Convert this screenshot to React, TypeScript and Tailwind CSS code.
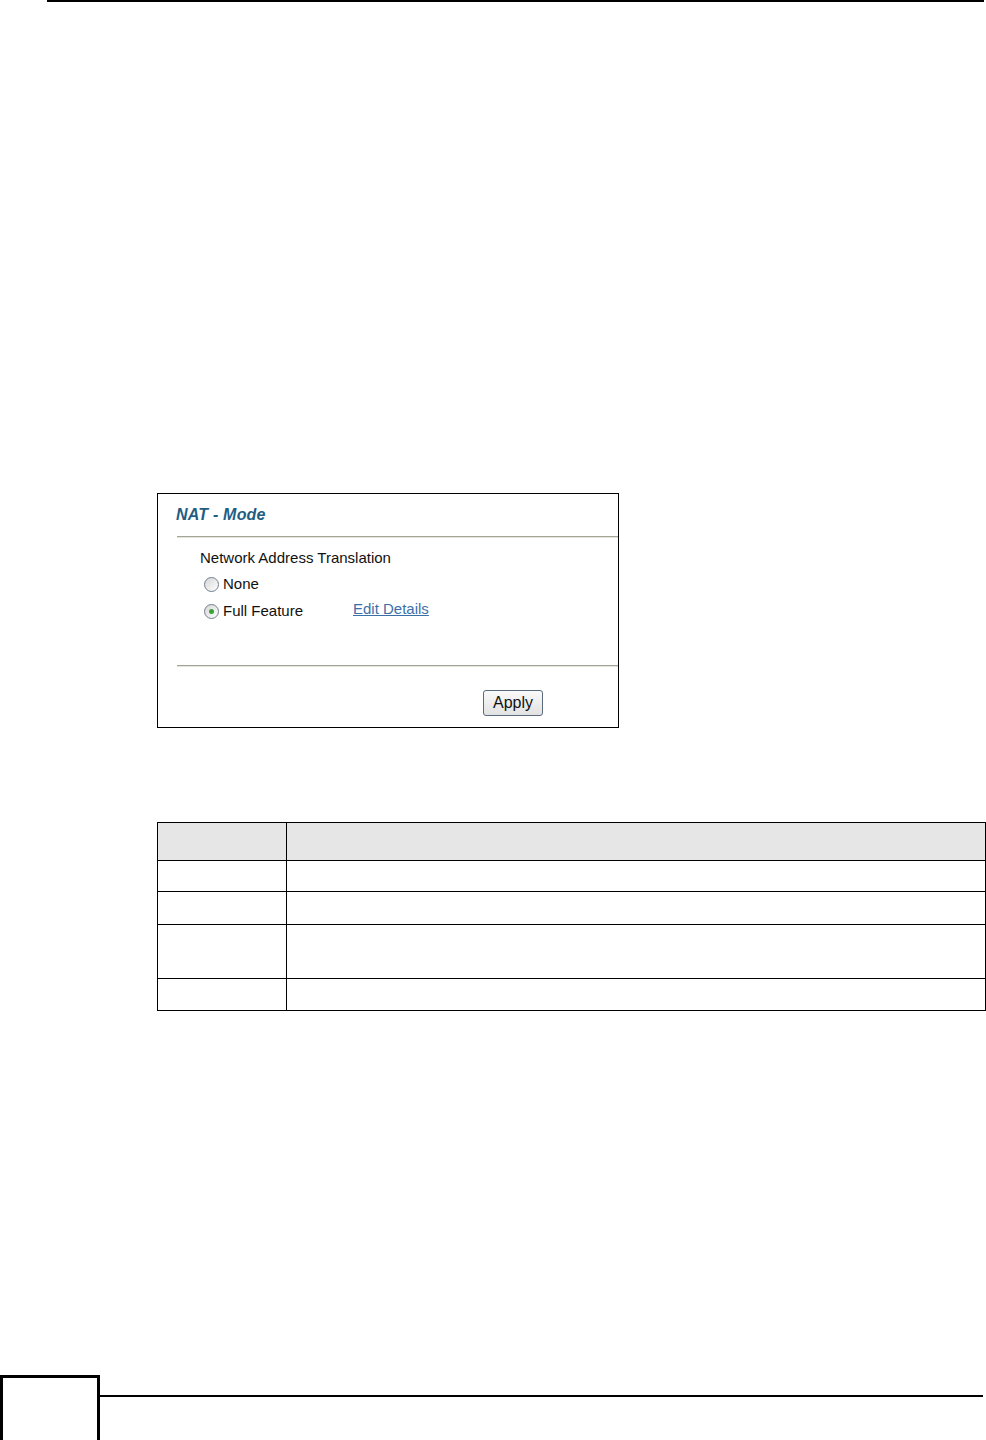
import React from "react";

function Radio({ checked }: { checked?: boolean }) {
  return (
    <span className="relative inline-flex h-[15px] w-[15px] shrink-0 items-center justify-center rounded-full border border-[#6f7f8f] bg-gradient-to-br from-[#d6d6d6] to-[#ffffff]">
      {checked && <span className="h-[5px] w-[5px] rounded-full bg-[#36a336]" />}
    </span>
  );
}

export default function App() {
  const rows = [31, 33, 54, 32];
  return (
    <div className="relative flex h-[1440px] w-[986px] flex-col overflow-hidden bg-white" style={{ fontFamily: '"Liberation Sans", Arial, sans-serif' }}>
      {/* top rule */}
      <div className="ml-[47px] h-[2px] w-[937px] bg-black" />

      {/* NAT box */}
      <div className="ml-[157px] mt-[491px] flex h-[235px] w-[462px] flex-col border border-black bg-white">
        <div className="ml-[18px] mt-[11px] h-[20px] text-[16px] font-bold italic leading-[20px] tracking-[0.2px] text-[#1f5d82]">
          NAT - Mode
        </div>
        <div className="ml-[19px] mt-[11px] h-[2px] border-t border-[#a5a597] border-b border-b-[#e4e4dc]" />
        <div className="ml-[42px] mt-[11px] h-[18px] text-[15px] leading-[18px] text-[#111]">
          Network Address Translation
        </div>
        <div className="ml-[46px] mt-[8px] flex h-[18px] items-center gap-[4px] text-[15px] leading-[18px] text-[#111]">
          <Radio />
          <span>None</span>
        </div>
        <div className="ml-[46px] mt-[8px] flex h-[20px] items-center text-[15px] leading-[18px] text-[#111]">
          <Radio checked />
          <span className="ml-[4px] w-[130px]">Full Feature</span>
          <a className="-mt-[4px] text-[#3c6fa8] underline" href="#">Edit Details</a>
        </div>
        <div className="ml-[19px] mt-[44px] h-[2px] border-t border-[#a5a597] border-b border-b-[#e4e4dc]" />
        <div className="mt-[23px] flex">
          <button className="ml-[325px] h-[26px] w-[60px] rounded-[3px] border border-[#5a6b7d] bg-gradient-to-b from-[#fafafa] to-[#e2e2e2] text-[16px] leading-[22px] text-[#111]">
            Apply
          </button>
        </div>
      </div>

      {/* table */}
      <div className="ml-[157px] mt-[94px] w-[829px]">
        <table className="w-full border-collapse border-[1.5px] border-black">
          <tbody>
            <tr className="h-[38px] bg-[#e6e6e6]">
              <td className="w-[129px] border-[1.5px] border-black"></td>
              <td className="border-[1.5px] border-black"></td>
            </tr>
            {rows.map((h, i) => (
              <tr key={i} style={{ height: h }}>
                <td className="border-[1.5px] border-black"></td>
                <td className="border-[1.5px] border-black"></td>
              </tr>
            ))}
          </tbody>
        </table>
      </div>

      {/* footer */}
      <div className="mt-auto flex h-[65px] items-start">
        <div className="h-[65px] w-[100px] border-[3px] border-b-0 border-black" />
        <div className="mt-[20px] h-[2px] w-[883px] bg-black" />
      </div>
    </div>
  );
}
